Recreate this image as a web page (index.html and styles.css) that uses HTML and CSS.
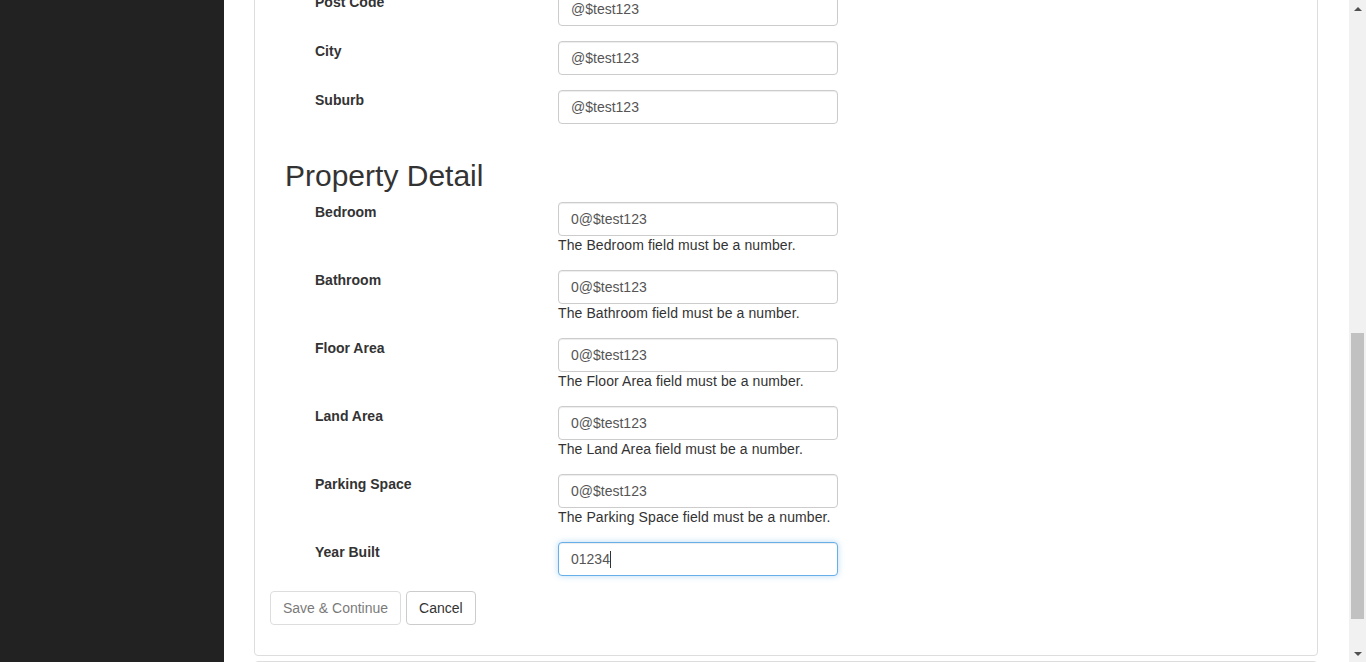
FILE: index.html
```html
<!DOCTYPE html>
<html>
<head>
<meta charset="utf-8">
<link rel="stylesheet" href="styles.css">
</head>
<body>
<div class="app">
  <aside class="sidebar"></aside>
  <main class="main">
    <div class="panel scrolled">
      <div class="panel-body">
        <div class="form-group">
          <label class="control-label">Post Code</label>
          <div class="control"><input class="form-control" value="@$test123" readonly></div>
        </div>
        <div class="form-group">
          <label class="control-label">City</label>
          <div class="control"><input class="form-control" value="@$test123" readonly></div>
        </div>
        <div class="form-group">
          <label class="control-label">Suburb</label>
          <div class="control"><input class="form-control" value="@$test123" readonly></div>
        </div>

        <h2 class="section-title">Property Detail</h2>

        <div class="form-group">
          <label class="control-label">Bedroom</label>
          <div class="control"><input class="form-control" value="0@$test123" readonly><span class="help">The Bedroom field must be a number.</span></div>
        </div>
        <div class="form-group">
          <label class="control-label">Bathroom</label>
          <div class="control"><input class="form-control" value="0@$test123" readonly><span class="help">The Bathroom field must be a number.</span></div>
        </div>
        <div class="form-group">
          <label class="control-label">Floor Area</label>
          <div class="control"><input class="form-control" value="0@$test123" readonly><span class="help">The Floor Area field must be a number.</span></div>
        </div>
        <div class="form-group">
          <label class="control-label">Land Area</label>
          <div class="control"><input class="form-control" value="0@$test123" readonly><span class="help">The Land Area field must be a number.</span></div>
        </div>
        <div class="form-group">
          <label class="control-label">Parking Space</label>
          <div class="control"><input class="form-control" value="0@$test123" readonly><span class="help">The Parking Space field must be a number.</span></div>
        </div>
        <div class="form-group">
          <label class="control-label">Year Built</label>
          <div class="control"><div class="form-control focused">01234<span class="caret-line"></span></div></div>
        </div>

        <div class="actions">
          <button class="btn btn-disabled" disabled>Save &amp; Continue</button>
          <button class="btn">Cancel</button>
        </div>
      </div>
    </div>
    <div class="panel next"></div>
  </main>
  <div class="scrollbar">
    <div class="sb-arrow"><span class="tri-up"></span></div>
    <div class="sb-track"><div class="sb-thumb"></div></div>
    <div class="sb-arrow"><span class="tri-down"></span></div>
  </div>
</div>
</body>
</html>
```
FILE: styles.css
```css
* { box-sizing: border-box; }
html, body { margin: 0; padding: 0; height: 100%; overflow: hidden; }
body {
  font-family: "Liberation Sans", Arial, sans-serif;
  font-size: 14px;
  line-height: 20px;
  color: #333;
  background: #fff;
}
.app { display: flex; height: 662px; }
.sidebar { width: 224px; flex: none; background: #222; }
.main { flex: 1; overflow: hidden; padding: 0 31px 0 30px; background: #fff; }
.panel {
  border: 1px solid #ddd;
  border-radius: 4px;
  background: #fff;
}
.scrolled { margin-top: -24px; }
.panel-body { padding: 15px; display: flex; flex-direction: column; }
.next { margin-top: 5px; height: 40px; }

.form-group { display: flex; margin-bottom: 15px; }
.control-label {
  width: 288px;
  padding-left: 45px;
  font-weight: bold;
  flex: none;
}
.control { width: 280px; display: flex; flex-direction: column; }
.form-control {
  display: block;
  width: 280px;
  height: 34px;
  padding: 6px 12px;
  font-family: "Liberation Sans", Arial, sans-serif;
  font-size: 14px;
  line-height: 20px;
  color: #555;
  background: #fff;
  border: 1px solid #ccc;
  border-radius: 4px;
  box-shadow: inset 0 1px 1px rgba(0,0,0,.075);
  outline: none;
}
.focused {
  border-color: #66afe9;
  box-shadow: inset 0 1px 1px rgba(0,0,0,.075), 0 0 6px rgba(102,175,233,.45);
}
.caret-line {
  display: inline-block;
  width: 1px;
  height: 17px;
  background: #333;
  vertical-align: -4px;
}
.help { display: block; line-height: 19px; color: #333; letter-spacing: 0.1px; }

.section-title {
  font-size: 30px;
  font-weight: 500;
  line-height: 33px;
  margin: 20px 0 10px;
  padding-left: 15px;
  color: #333;
}

.actions { display: flex; gap: 5px; margin-bottom: 15px; }
.btn {
  height: 34px;
  padding: 6px 12px;
  font-family: "Liberation Sans", Arial, sans-serif;
  font-size: 14px;
  line-height: 20px;
  color: #333;
  background: #fff;
  border: 1px solid #ccc;
  border-radius: 4px;
}
.btn-disabled { opacity: .65; color: #333; }

.scrollbar {
  width: 17px;
  flex: none;
  background: #f1f1f1;
  display: flex;
  flex-direction: column;
}
.sb-arrow { height: 17px; display: flex; align-items: center; justify-content: center; }
.tri-up { width: 0; height: 0; border-left: 4px solid transparent; border-right: 4px solid transparent; border-bottom: 4px solid #505050; }
.tri-down { width: 0; height: 0; border-left: 4px solid transparent; border-right: 4px solid transparent; border-top: 4px solid #505050; }
.sb-track { flex: 1; padding: 0 2px; }
.sb-thumb { margin-top: 316px; height: 286px; background: #c1c1c1; }
```
